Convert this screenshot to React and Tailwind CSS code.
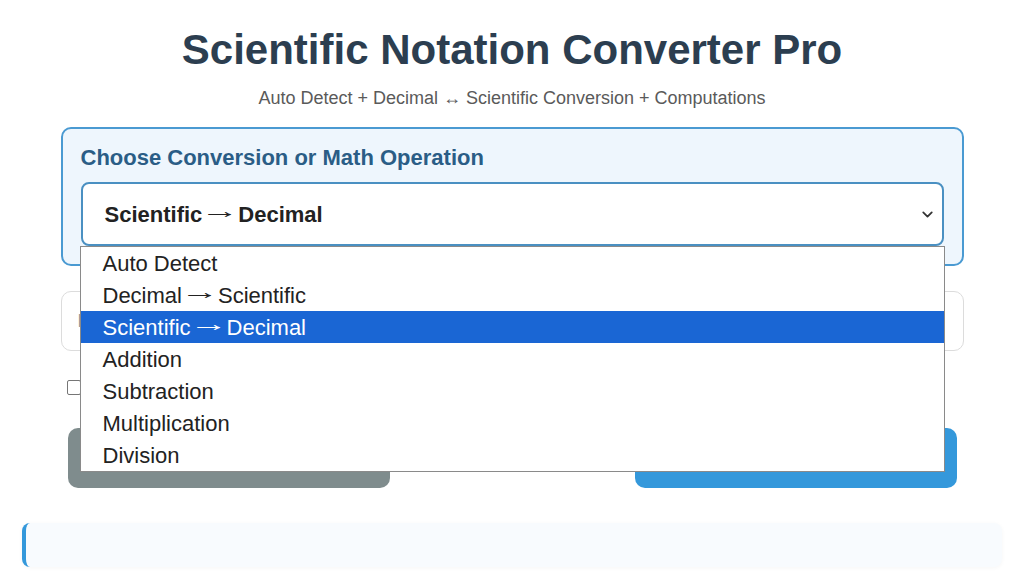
import { ChevronDown } from 'lucide-react'

const OPTIONS = [
  ['Auto Detect'],
  ['Decimal', 'Scientific'],
  ['Scientific', 'Decimal'],
  ['Addition'],
  ['Subtraction'],
  ['Multiplication'],
  ['Division'],
]

// thin, long arrow like the one the native list shows
const Arrow = () => (
  <span className="inline-block w-[24px] mx-[6px] text-center font-normal">
    <span className="inline-block scale-x-[1.75] -translate-y-[4px]">→</span>
  </span>
)

const Label = ({ parts }) =>
  parts.length === 1 ? (
    <>{parts[0]}</>
  ) : (
    <>
      {parts[0]}
      <Arrow />
      {parts[1]}
    </>
  )

export default function App() {
  return (
    <div className="min-h-[587px] bg-white font-['Liberation_Sans',Arial,sans-serif] overflow-hidden">
      <div className="w-[903px] mx-auto pt-[25px]">
        <h1 className="text-center text-[42px] leading-[50px] font-bold text-[#2c3e50]">
          Scientific Notation Converter Pro
        </h1>
        <p className="text-center text-[18px] leading-[22px] text-[#5a5a5a] mt-[12px]">
          Auto Detect + Decimal ↔ Scientific Conversion + Computations
        </p>

        {/* operation picker */}
        <div className="mt-[18px] rounded-[10px] border-2 border-[#4a9ad2] bg-[#eef6fd] px-[18px] pt-[16px] pb-[18px]">
          <div className="text-[22px] leading-[26px] font-bold text-[#2a5d86]">
            Choose Conversion or Math Operation
          </div>
          <div className="relative mt-[11px]">
            <div className="h-[64px] rounded-[8px] border-2 border-[#4a90c2] bg-white flex items-center justify-between pl-[22px] pr-[6px]">
              <span className="text-[22px] font-bold text-[#222]">
                <Label parts={['Scientific', 'Decimal']} />
              </span>
              <ChevronDown size={17} strokeWidth={2.5} className="text-[#333]" />
            </div>

            {/* open native list */}
            <ul className="absolute z-10 -left-px -right-px top-[64px] bg-white border border-[#8a8a8a]">
              {OPTIONS.map((o, i) => (
                <li
                  key={i}
                  className={
                    i === 2
                      ? 'h-[32px] flex items-center pl-[22px] text-[22px] bg-[#1a66d4] text-white'
                      : 'h-[32px] flex items-center pl-[22px] text-[22px] text-[#222]'
                  }
                >
                  <span>
                    <Label parts={o} />
                  </span>
                </li>
              ))}
            </ul>
          </div>
        </div>

        {/* number input */}
        <div className="mt-[25px] h-[60px] rounded-[10px] border border-[#dcdcdc] bg-white flex items-center px-[16px]">
          <span className="text-[18px] text-[#999]">Enter a number in scientific notation</span>
        </div>

        <label className="flex items-center gap-2 mt-[24px] ml-[6px] text-[16px] text-[#333]">
          <span className="w-[14px] h-[15px] border border-[#767676] rounded-[2px] bg-white" />
          Show step-by-step explanation
        </label>

        <div className="mt-[29px] flex justify-between px-[7px]">
          <button className="w-[322px] h-[60px] rounded-[10px] bg-[#7f8c8d] text-white text-[18px] font-bold">
            Clear
          </button>
          <button className="w-[322px] h-[60px] rounded-[10px] bg-[#3498db] text-white text-[18px] font-bold">
            Convert / Calculate
          </button>
        </div>
      </div>

      {/* result */}
      <div className="mx-[22px] mt-[35px] h-[44px] rounded-[8px] border-l-4 border-[#3498db] bg-[#f8fbfe] shadow-[0_1px_4px_rgba(0,0,0,0.04)]" />
    </div>
  )
}
